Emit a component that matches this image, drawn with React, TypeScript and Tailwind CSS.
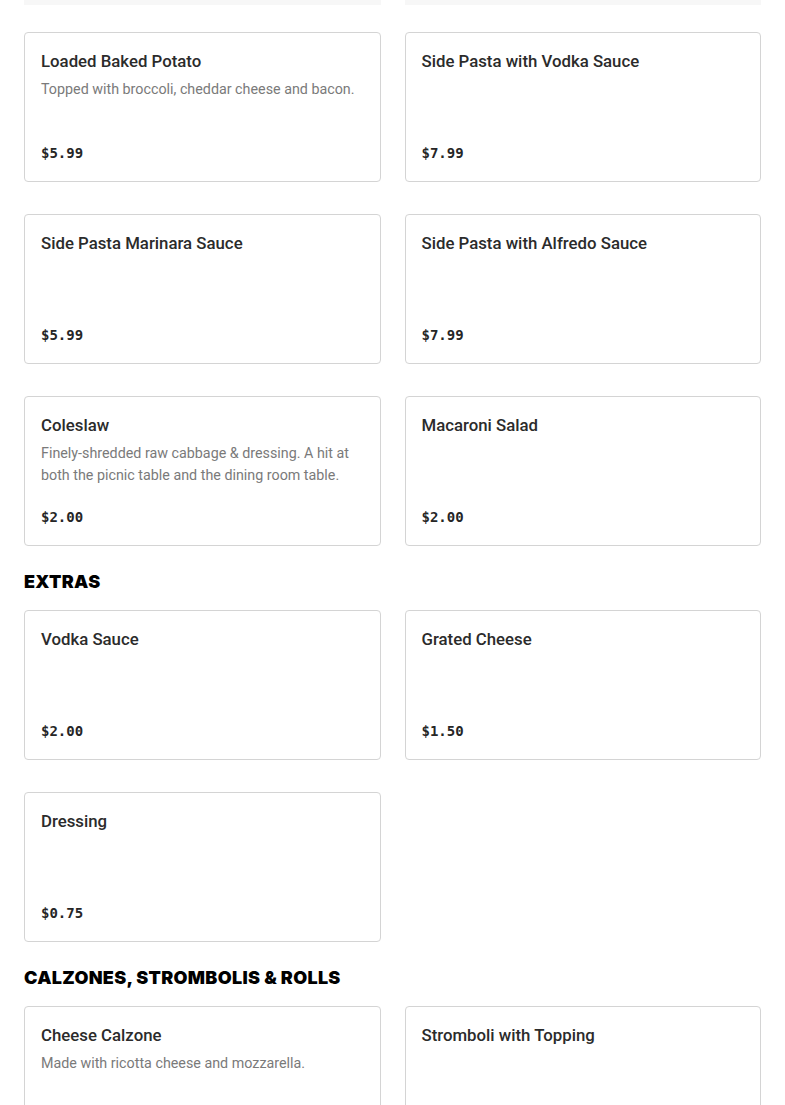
import React from "react";

type Item = { name: string; desc?: string; price: string };

const sides: Item[] = [
  { name: "Loaded Baked Potato", desc: "Topped with broccoli, cheddar cheese and bacon.", price: "$5.99" },
  { name: "Side Pasta with Vodka Sauce", price: "$7.99" },
  { name: "Side Pasta Marinara Sauce", price: "$5.99" },
  { name: "Side Pasta with Alfredo Sauce", price: "$7.99" },
  {
    name: "Coleslaw",
    desc: "Finely-shredded raw cabbage & dressing. A hit at both the picnic table and the dining room table.",
    price: "$2.00",
  },
  { name: "Macaroni Salad", price: "$2.00" },
];

const extras: Item[] = [
  { name: "Vodka Sauce", price: "$2.00" },
  { name: "Grated Cheese", price: "$1.50" },
  { name: "Dressing", price: "$0.75" },
];

const calzones: Item[] = [
  { name: "Cheese Calzone", desc: "Made with ricotta cheese and mozzarella.", price: "$9.99" },
  { name: "Stromboli with Topping", price: "$11.99" },
];

function Card({ item }: { item: Item }) {
  return (
    <div className="h-[150px] border border-[#d4d4d4] rounded-[4px] bg-white px-4 py-4 flex flex-col justify-between">
      <div>
        <div className="text-[16.8px] leading-6 font-medium text-[#2b2b2b]">{item.name}</div>
        {item.desc && (
          <div className="mt-[5px] text-[14.3px] leading-[22px] text-[#7a7a7a]">{item.desc}</div>
        )}
      </div>
      <div className="font-['DejaVu_Sans_Mono',monospace] font-bold text-[14px] leading-6 text-[#262626]">
        {item.price}
      </div>
    </div>
  );
}

function Section({ title, items }: { title: string; items: Item[] }) {
  return (
    <div className="mt-[22px]">
      <h2 className="font-['Inter',sans-serif] text-[18px] leading-7 font-black tracking-[0.3px] text-black mb-[14px]">
        {title}
      </h2>
      <div className="grid grid-cols-2 gap-x-6 gap-y-8">
        {items.map((it) => (
          <Card key={it.name} item={it} />
        ))}
      </div>
    </div>
  );
}

export default function App() {
  return (
    <div className="bg-white px-6 font-['Roboto','Liberation_Sans',sans-serif] h-[1105px] overflow-hidden">
      <div className="grid grid-cols-2 gap-x-6">
        <div className="h-[5px] bg-[#f7f7f7]" />
        <div className="h-[5px] bg-[#f7f7f7]" />
      </div>
      <div className="mt-[27px] grid grid-cols-2 gap-x-6 gap-y-8">
        {sides.map((it) => (
          <Card key={it.name} item={it} />
        ))}
      </div>
      <Section title="EXTRAS" items={extras} />
      <Section title="CALZONES, STROMBOLIS & ROLLS" items={calzones} />
    </div>
  );
}
